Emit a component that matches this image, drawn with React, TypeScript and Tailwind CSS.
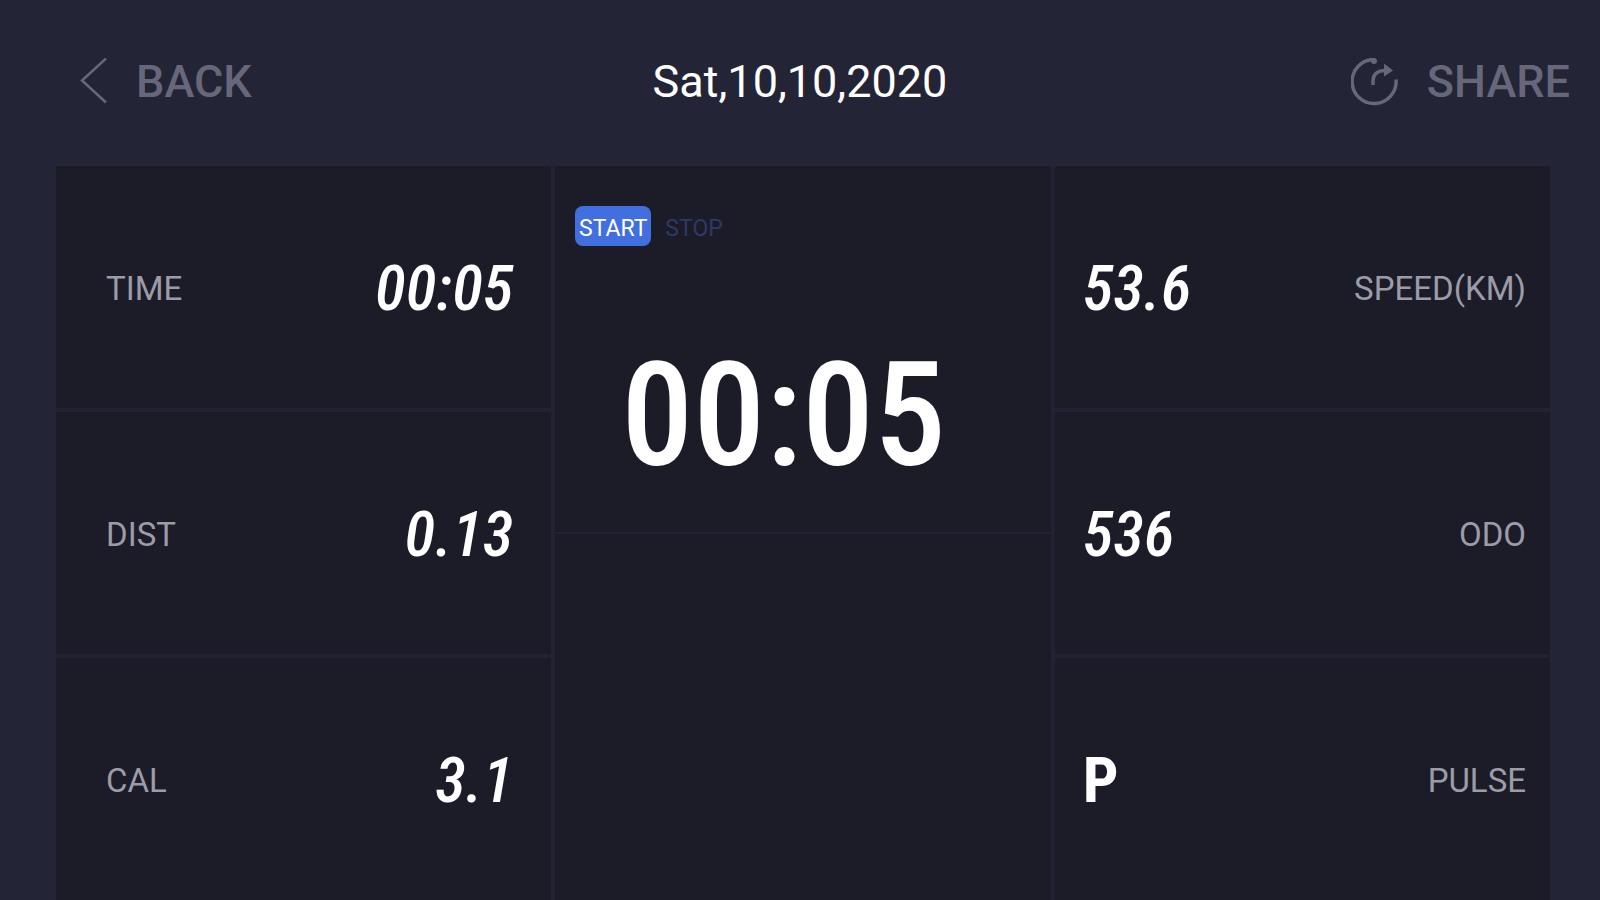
import clsx from "clsx";

type Metric = { label: string; value: string; upright?: boolean };

const leftMetrics: Metric[] = [
  { label: "TIME", value: "00:05" },
  { label: "DIST", value: "0.13" },
  { label: "CAL", value: "3.1" },
];

const rightMetrics: Metric[] = [
  { label: "SPEED(KM)", value: "53.6" },
  { label: "ODO", value: "536" },
  { label: "PULSE", value: "P", upright: true },
];

function BackIcon() {
  return (
    <svg className="h-12 w-8" viewBox="0 0 32 48" fill="none" stroke="currentColor" strokeWidth="2.5" aria-hidden="true">
      <path d="M26 0.500 2 22.500 26 44.500" />
    </svg>
  );
}

function ShareIcon() {
  return (
    <svg className="h-12 w-12" viewBox="1 1 48 48" fill="none" stroke="currentColor" strokeWidth="3.5" aria-hidden="true">
      <path d="M24 2.5A22 22 0 1 0 46 22.5" />
      <circle cx="24" cy="4" r="3" fill="currentColor" stroke="none" />
      <path d="M23 28V24C23 17 28 13.500 35 13.500" />
      <path d="M34 6.500 43 13.500 34 19.500Z" fill="currentColor" stroke="none" />
    </svg>
  );
}

function MetricCell({ metric, mirrored }: { metric: Metric; mirrored?: boolean }) {
  return (
    <div
      className={clsx(
        "flex items-center justify-between bg-[#1b1c28]",
        mirrored ? "flex-row-reverse pr-6 pl-7" : "pr-[38px] pl-[50px]",
      )}
    >
      <dt className="pt-1 text-[33px] leading-10 text-[#9c9ca8]">{metric.label}</dt>
      <dd
        className={clsx(
          "pt-1 font-['Roboto_Condensed','Roboto',sans-serif] text-[63px] leading-[72px] text-white",
          metric.upright ? "font-bold" : "font-medium italic",
        )}
      >
        {metric.value}
      </dd>
    </div>
  );
}

export default function App() {
  return (
    <div className="flex min-h-screen flex-col bg-[#232435] font-['Roboto',sans-serif]">
      <header className="grid grid-cols-3 items-center px-[30px] pt-[58px] pb-[60px] text-[45px] leading-12">
        <button type="button" className="ml-[50px] flex items-center gap-6 justify-self-start font-medium text-[#66677a]">
          <BackIcon />
          BACK
        </button>
        <h1 className="text-center text-white">Sat,10,10,2020</h1>
        <button type="button" className="flex items-center gap-7 justify-self-end font-medium text-[#66677a]">
          <ShareIcon />
          SHARE
        </button>
      </header>

      <main className="mr-[50px] ml-14 grid flex-1 grid-cols-3 gap-1 bg-[#212232]">
        <dl className="grid grid-rows-3 gap-1">
          {leftMetrics.map((metric) => (
            <MetricCell key={metric.label} metric={metric} />
          ))}
        </dl>

        <section className="grid grid-rows-2 gap-0.5">
          <div className="flex flex-col bg-[#1b1c28]">
            <div className="flex items-center gap-2.5 px-5 pt-10 text-[23px]">
              <button type="button" className="h-10 w-[76px] rounded-lg bg-[#416fdf] pt-1.5 text-white">
                START
              </button>
              <button type="button" className="h-10 px-1 pt-1.5 text-[#2f3867]">
                STOP
              </button>
            </div>
            <p className="mt-[90px] pl-[66px] font-['Roboto_Condensed','Roboto',sans-serif] text-[144px] leading-[160px] font-medium text-white">
              00:05
            </p>
          </div>
          <div className="bg-[#1b1c28]" />
        </section>

        <dl className="grid grid-rows-3 gap-1">
          {rightMetrics.map((metric) => (
            <MetricCell key={metric.label} metric={metric} mirrored />
          ))}
        </dl>
      </main>
    </div>
  );
}
